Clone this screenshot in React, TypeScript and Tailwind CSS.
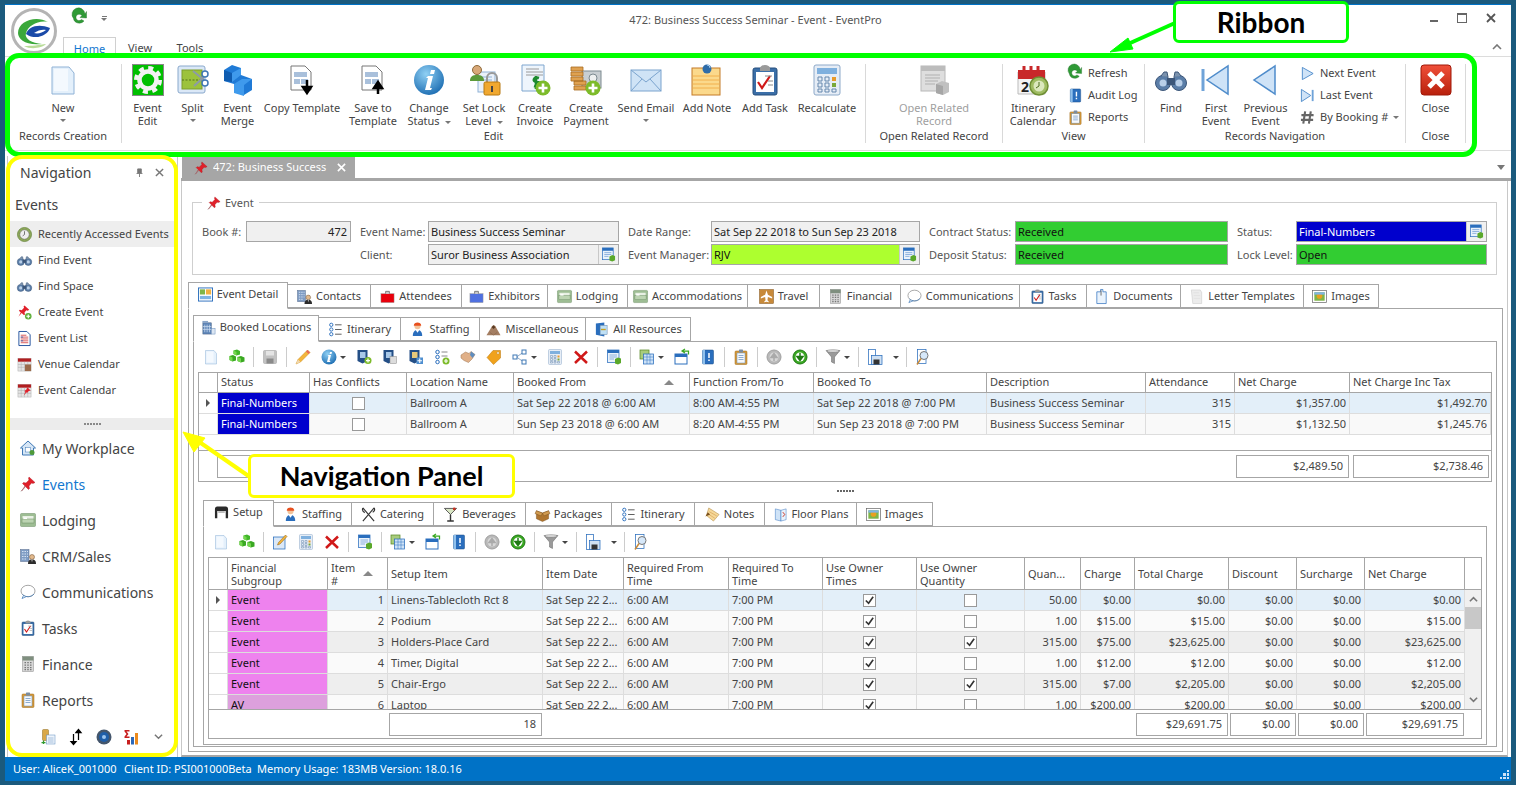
import React from "react";

const font = "font-['Noto_Sans','Open_Sans',sans-serif]";

// every icon is drawn on a 32x32 box and scaled down where needed
const I: Record<string, React.ReactNode> = {
  newdoc: (<><path d="M5 3h17l5 6v21H5z" fill="#e4f0fb" stroke="#8fb2d6" /><path d="M7 5h14v22H7z" fill="#f4f9fe" /></>),
  gear: (<><rect x=".5" y=".5" width="31" height="31" fill="#00bf00" stroke="#888" /><circle cx="16" cy="16" r="12" fill="none" stroke="#f2f2f2" strokeWidth="4" strokeDasharray="5 4.4" /><circle cx="16" cy="16" r="8.5" fill="#00bf00" stroke="#f2f2f2" strokeWidth="4.5" /></>),
  split: (<><rect x="1" y="2" width="27" height="27" rx="2" fill="#dbe8f7" stroke="#8aa9cc" /><rect x="5" y="6" width="20" height="19" fill="#9cc23c" stroke="#7d9e2c" /><path d="M5 16h20" stroke="#54701a" strokeDasharray="2 1.5" /><path d="M16 7l11 9M17 22l10-9" stroke="#8c9aa8" strokeWidth="2" /><circle cx="28" cy="10" r="3" fill="#fff" stroke="#3f78b5" strokeWidth="1.5" /><circle cx="28" cy="19" r="3" fill="#fff" stroke="#3f78b5" strokeWidth="1.5" /></>),
  merge: (<><path d="M2 6l8-5 9 3v7l11 4v11l-8 5-10-3v-8L2 17z" fill="#1f7ad6" /><path d="M2 6l8 3v9l-8-1z" fill="#0f5cb0" /><path d="M10 9l9-5v7l-9 7zM12 20l8-5 10 0-8 6v11l-10-3z" fill="#3f9aec" /></>),
  copytpl: (<><path d="M5 2h14l6 6v18H5z" fill="#fff" stroke="#777" /><path d="M8 8h13v5H8zM8 15h6v5H8zM15 15h7v5h-7z" fill="#a9c0db" /><path d="M21 16v10M17 23l4 6 4-6z" stroke="#000" strokeWidth="2.5" /></>),
  savetpl: (<><path d="M5 2h14l6 6v18H5z" fill="#fff" stroke="#777" /><path d="M8 8h13v5H8zM8 15h6v5H8zM15 15h7v5h-7z" fill="#a9c0db" /><path d="M21 20v10M17 24l4-6 4 6z" stroke="#000" strokeWidth="2.5" /></>),
  info: (<><circle cx="16" cy="16" r="15" fill="url(#gi)" /><path d="M18 6h4l-1 4h-4zM15 12h5l-3 12h2l-1 2h-6l3-12h-2z" fill="#fff" /></>),
  lock: (<><rect x="10" y="8" width="17" height="20" fill="#eaf1fa" stroke="#8fb2d6" /><path d="M13 13h11M13 16h11" stroke="#8fb2d6" /><circle cx="9" cy="6" r="4.5" fill="#d8a878" stroke="#8f6a3a" /><path d="M2 17c0-5 3-6 7-6s7 1 7 6z" fill="#5c9a3a" /><path d="M19 18v-4a5 5 0 0110 0v4" fill="none" stroke="#999" strokeWidth="2" /><rect x="16" y="18" width="16" height="13" rx="1.5" fill="#f0a830" stroke="#b87810" /><rect x="23" y="22" width="2" height="6" fill="#444" /></>),
  invoice: (<><path d="M3 1h22v26H3z" fill="#eef5fc" stroke="#7fa6cf" /><path d="M7 5h13M7 8h17M7 11h17" stroke="#9a9a9a" /><path d="M20 14c-6-2-7 4-2 4s4 6-3 4M17 12v13" fill="none" stroke="#1c8a2e" strokeWidth="2.6" /><circle cx="24" cy="24" r="7.5" fill="#7dbb2a" /><path d="M24 19.5v9M19.5 24h9" stroke="#fff" strokeWidth="2.6" /></>),
  payment: (<><rect x="12" y="7" width="19" height="17" fill="#c8ced2" stroke="#7c8a90" /><circle cx="23" cy="14" r="4" fill="#eef0f0" stroke="#7c8a90" /><path d="M1 3h12v4H1zM1 8h12v4H1zM1 13h12v4H1zM4 17h12v4H4zM4 22h12v4H4z" fill="#dfa150" stroke="#a86d22" strokeWidth=".8" /><circle cx="23" cy="24" r="7.5" fill="#7dbb2a" /><path d="M23 19.5v9M18.5 24h9" stroke="#fff" strokeWidth="2.6" /></>),
  email: (<><rect x="1" y="6" width="30" height="21" fill="#cfe3f6" stroke="#7aa3ce" /><path d="M1 6l15 12L31 6M1 27l11-12M31 27L20 15" fill="none" stroke="#7aa3ce" /></>),
  note: (<><rect x="1" y="4" width="28" height="27" fill="#fbd98c" stroke="#c47b26" /><path d="M2 12h26M2 16h26M2 20h26M2 24h26" stroke="#f2b04c" /><circle cx="16" cy="5" r="4.5" fill="#2f6ca8" /><path d="M16 1a3 3 0 013 3" stroke="#a5cdf0" fill="none" /></>),
  task: (<><rect x="4" y="4" width="24" height="27" rx="2" fill="#3b6fa8" stroke="#264e7c" /><rect x="7" y="8" width="18" height="20" fill="#fff" /><path d="M11 4a5 3 0 0110 0v3H11z" fill="#9a9a9a" /><path d="M9 18l4 6 8-12" fill="none" stroke="#d01818" strokeWidth="2.2" /><path d="M16 12h7M19 17h5M19 21h5" stroke="#888" /></>),
  calc: (<><rect x="3" y="1" width="26" height="30" rx="2" fill="#e6edf6" stroke="#8da9c9" /><rect x="6" y="4" width="20" height="6" fill="#7fb0de" /><path d="M7 13h4v4H7zM14 13h4v4h-4zM7 19h4v4H7zM14 19h4v4h-4zM7 25h4v3H7zM14 25h4v3h-4zM21 25h4v3h-4z" fill="none" stroke="#6487ad" /><rect x="21" y="13" width="4" height="4" fill="#e99b2a" /><rect x="21" y="19" width="4" height="4" fill="#79a83a" /></>),
  related: (<><rect x="3" y="2" width="24" height="25" fill="#dedede" stroke="#b8b8b8" /><rect x="3" y="2" width="24" height="5" fill="#bcbcbc" /><path d="M7 11h15M7 14h15M7 17h13M7 20h10" stroke="#b0b0b0" /><path d="M18 20l6-3 7 2v9l-6 3-7-2z" fill="#c0c0c0" /><path d="M18 20l7 2v9l-7-2z" fill="#a6a6a6" /></>),
  cal: (<><path d="M1 8h27v22H1z" fill="#f4f4f4" stroke="#bbb" /><path d="M1 6h27v9H1z" fill="#c8282a" /><path d="M7 2v6M14 2v6M21 2v6" stroke="#c8282a" strokeWidth="3" /><text x="4" y="28" fontSize="14" fontWeight="700" fill="#222">2</text><circle cx="22" cy="22" r="9" fill="#9fbc62" stroke="#6f8f34" strokeWidth="1.5" /><circle cx="22" cy="22" r="5.5" fill="#dbe8bd" /><path d="M22 18v4l-3 2" stroke="#4f6f20" fill="none" /></>),
  refresh: (<><path d="M26 8A13 13 0 103 17c1 9 14 13 21 5l-5-3c-4 4-10 2-11-3C7 9 15 6 20 11l-4 4 13 1V3z" fill="#2f9a36" stroke="#1f6f26" strokeWidth=".8" /></>),
  audit: (<><rect x="5" y="2" width="22" height="28" rx="2" fill="#2a6ebd" stroke="#174a85" /><rect x="5" y="2" width="5" height="28" fill="#8fc0ec" /><path d="M18 8v10M18 21v3" stroke="#fff" strokeWidth="3" /></>),
  reports: (<><rect x="4" y="4" width="24" height="27" rx="2" fill="#d89b3a" stroke="#9c6a1c" /><rect x="8" y="8" width="16" height="20" fill="#f6f8fb" stroke="#5e8dbf" /><rect x="12" y="1" width="8" height="6" rx="1" fill="#7a8ca0" /><path d="M11 13h10M11 17h10M11 21h10" stroke="#5e8dbf" strokeWidth="1.4" /></>),
  binoc: (<><circle cx="8" cy="19" r="7.5" fill="#5b7ea8" stroke="#3c5679" /><circle cx="24" cy="19" r="7.5" fill="#5b7ea8" stroke="#3c5679" /><circle cx="8" cy="19" r="3.5" fill="#b9cfe8" /><circle cx="24" cy="19" r="3.5" fill="#b9cfe8" /><rect x="12" y="14" width="8" height="7" fill="#3c5679" /><path d="M6 12l3-4h3l1 5M26 12l-3-4h-3l-1 5" fill="#7c93ae" stroke="#3c5679" /></>),
  first: (<><path d="M3 5v22" stroke="#6fa3d8" strokeWidth="3" /><path d="M28 2v28L7 16z" fill="#cfe3f7" stroke="#4f8ccb" strokeWidth="1.5" /></>),
  prev: (<><path d="M25 2v28L4 16z" fill="#cfe3f7" stroke="#4f8ccb" strokeWidth="1.5" /></>),
  next: (<><path d="M5 3v26l23-13z" fill="#cfe3f7" stroke="#4f8ccb" strokeWidth="2" /></>),
  last: (<><path d="M3 3v26l20-13z" fill="#cfe3f7" stroke="#4f8ccb" strokeWidth="2" /><path d="M27 4v24" stroke="#6fa3d8" strokeWidth="4" /></>),
  hash: (<path d="M11 3L7 29M23 3l-4 26M3 11h26M2 21h26" stroke="#666" strokeWidth="4.5" fill="none" />),
  closex: (<><rect x="1" y="1" width="30" height="30" rx="3" fill="url(#gr)" stroke="#a01808" /><path d="M9 9l14 14M23 9L9 23" stroke="#fff" strokeWidth="5" /></>),
  clock: (<><circle cx="16" cy="16" r="15" fill="#8ea95a" stroke="#64803a" strokeWidth="1.5" /><circle cx="16" cy="16" r="10" fill="#eee" stroke="#555" /><path d="M16 9v7l-4 3" stroke="#444" fill="none" strokeWidth="1.5" /></>),
  pin: (<><path d="M18 2l12 11-4 2-3-1-5 6 1 5-2 2-6-6-8 9 7-10-5-5 2-2 5 1 6-6-1-3z" fill="#e0202a" stroke="#a81018" strokeWidth=".8" /><path d="M11 21L2 31" stroke="#999" strokeWidth="1.5" /></>),
  pinadd: (<><path d="M16 1l10 9-3 2-3-1-4 5 1 4-2 2-5-5-7 8 5-9-4-4 2-2 4 1 5-5-1-3z" fill="#e0202a" /><circle cx="24" cy="24" r="7" fill="#5fb03a" /><path d="M24 20v8M20 24h8" stroke="#fff" strokeWidth="2.4" /></>),
  list: (<><path d="M4 1h17l7 7v23H4z" fill="#fff" stroke="#1f4f9c" strokeWidth="2" /><path d="M8 9h12M8 13h16M8 17h16M8 21h16M8 25h16" stroke="#d02828" strokeWidth="1.6" /><path d="M8 13h5M8 21h5" stroke="#2050b0" strokeWidth="1.6" /></>),
  vcal: (<><rect x="2" y="3" width="28" height="27" fill="#e4e4e4" stroke="#aaa" /><rect x="2" y="3" width="28" height="7" fill="#b01e20" /><path d="M2 16h28M2 22h28M9 10v20M16 10v20M23 10v20" stroke="#aaa" /><rect x="17" y="16" width="13" height="14" fill="#9a6a4a" /></>),
  ecal: (<><rect x="2" y="3" width="28" height="27" fill="#e4e4e4" stroke="#aaa" /><rect x="2" y="3" width="28" height="7" fill="#b01e20" /><path d="M2 16h28M2 22h28M9 10v20M16 10v20M23 10v20" stroke="#aaa" /><path d="M22 9l7 7-4 1-3 4-2-1-6 7 4-8-2-2 4-3z" fill="#e0202a" /></>),
  home: (<><path d="M16 2L1 16h4v14h22V16h4z" fill="#d6e6f6" stroke="#3f78b5" strokeWidth="2" /><rect x="11" y="15" width="10" height="9" fill="#fff" stroke="#3f78b5" /><circle cx="24" cy="25" r="5" fill="#4e9a3a" /></>),
  lodging: (<><rect x="1" y="3" width="30" height="26" rx="2" fill="#9dbd93" stroke="#6b8c62" /><rect x="5" y="8" width="22" height="14" fill="#e8f0e4" /><rect x="4" y="14" width="24" height="8" fill="#bcd4b2" stroke="#6b8c62" /><rect x="7" y="11" width="7" height="3" fill="#fff" /></>),
  crm: (<><rect x="1" y="3" width="17" height="24" fill="#7f9cc4" stroke="#54698a" /><path d="M4 7h3M9 7h3M14 7h2M4 12h3M9 12h3M14 12h2M4 17h3M9 17h3M14 17h2M4 22h3M9 22h3" stroke="#d6e2f2" strokeWidth="2" /><circle cx="24" cy="18" r="5" fill="#e2b98d" stroke="#6a4a2a" /><path d="M16 32c0-7 3-9 8-9s8 2 8 9z" fill="#2c2c2c" /><path d="M23 23l1 6 1-6z" fill="#fff" /></>),
  bubble: (<><ellipse cx="16" cy="14" rx="14" ry="11.5" fill="#fff" stroke="#888" strokeWidth="1.5" /><path d="M7 23l-3 6 9-4" fill="#fff" stroke="#3f78b5" strokeWidth="1.5" /><path d="M5 21c6 6 17 6 23-1" fill="none" stroke="#3f78b5" strokeWidth="1.5" /></>),
  fin: (<><rect x="5" y="1" width="22" height="30" fill="#d8d8d8" stroke="#8a8a8a" /><rect x="5" y="1" width="22" height="8" fill="#7f8f7f" /><path d="M9 13h3M14.500 13h3M20 13h3M9 18h3M14.500 18h3M20 18h3M9 23h3M14.500 23h3M20 23h3M9 27h3M14.500 27h3M20 27h3" stroke="#777" strokeWidth="2.5" /></>),
  sumchart: (<><path d="M1 2h10v3H5l4 5-4 5h6v3H1v-3l4-5-4-5z" fill="#c81e1e" /><rect x="6" y="22" width="6" height="9" fill="#c81e1e" /><rect x="14" y="16" width="6" height="15" fill="#2c68b8" /><rect x="22" y="8" width="6" height="23" fill="#ec8a1c" /></>),
  moveitem: (<><rect x="5" y="1" width="12" height="22" rx="2" fill="#d9a848" stroke="#8f6a1c" /><rect x="13" y="12" width="17" height="18" fill="#eef4fb" stroke="#5e8dbf" /><path d="M16 18h11M16 22h11M16 26h11" stroke="#5e8dbf" /><path d="M7 23v7M3 27h8" stroke="#2e9a2e" strokeWidth="2.5" /></>),
  updown: (<path d="M11 10v20M6 25l5 6 5-6zM21 2v20M16 7l5-6 5 6z" stroke="#000" strokeWidth="2.5" fill="#000" />),
  lens: (<><circle cx="16" cy="16" r="15" fill="#44566c" /><circle cx="16" cy="16" r="10" fill="#1f5ea8" /><circle cx="16" cy="16" r="4" fill="#9cc4ee" /></>),
  addgreen: (<><path d="M9 3l7-2 6 3v7l-7 2-6-3z" fill="#42b72a" /><path d="M1 14l7-2 6 3v8l-7 2-6-3zM17 16l7-2 7 3v8l-7 2-7-3z" fill="#3aa822" /><path d="M1 14l6 3v8l-6-3zM17 16l7 3v8l-7-3zM9 3l6 3v7l-6-3z" fill="#74d84e" /></>),
  save: (<><rect x="3" y="3" width="26" height="26" rx="2" fill="#c2c2c2" stroke="#9c9c9c" /><rect x="8" y="4" width="16" height="9" fill="#e4e4e4" /><rect x="9" y="19" width="14" height="10" fill="#8a8a8a" /></>),
  pencil: (<><path d="M25 2l5 5-19 19-9 4 4-9z" fill="#f4b63c" stroke="#c98818" /><path d="M25 2l5 5-3 3-5-5z" fill="#e86a5a" /><path d="M2 30l4-9 5 5z" fill="#f0d8b0" /></>),
  shieldadd: (<><path d="M3 2h20v22l-10 5-10-5z" fill="#244f86" /><path d="M8 6h11v12H8z" fill="#a8c8e8" /><circle cx="24" cy="23" r="7" fill="#7dbb2a" /><path d="M24 19v8M20 23h8" stroke="#fff" strokeWidth="2.5" /></>),
  shieldcopy: (<><path d="M3 2h20v22l-10 5-10-5z" fill="#244f86" /><path d="M8 6h11v12H8z" fill="#a8c8e8" /><rect x="16" y="15" width="13" height="14" fill="#dcdcdc" stroke="#888" /></>),
  shieldnew: (<><path d="M3 2h20v22l-10 5-10-5z" fill="#244f86" /><path d="M8 6h11v12H8z" fill="#e6c87a" /><rect x="17" y="17" width="13" height="13" fill="#4f8fd0" /><path d="M23.500 19v9M19 23.500h9" stroke="#fff" strokeWidth="2.2" /></>),
  itin: (<><circle cx="7" cy="6" r="3.500" fill="#fff" stroke="#2a6ebd" strokeWidth="2" /><circle cx="7" cy="16" r="3.500" fill="#fff" stroke="#2a6ebd" strokeWidth="2" /><circle cx="7" cy="26" r="3.500" fill="#fff" stroke="#2a6ebd" strokeWidth="2" /><path d="M15 6h14M15 16h14M15 26h14" stroke="#555" strokeWidth="2" /></>),
  itinadd: (<><circle cx="7" cy="6" r="3.500" fill="#fff" stroke="#2a6ebd" strokeWidth="2" /><circle cx="7" cy="16" r="3.500" fill="#fff" stroke="#2a6ebd" strokeWidth="2" /><circle cx="7" cy="26" r="3.500" fill="#fff" stroke="#2a6ebd" strokeWidth="2" /><path d="M15 6h12M15 14h12" stroke="#888" strokeWidth="2" /><circle cx="24" cy="24" r="7" fill="#7dbb2a" /><path d="M24 20v8M20 24h8" stroke="#fff" strokeWidth="2.4" /></>),
  hands: (<><path d="M2 12l9-6 7 3 4-4 8 6-6 9-7 7-9-4-6-5z" fill="#e0b088" stroke="#9c7450" /><path d="M22 5l8 6-5 7-5-6z" fill="#5e8dbf" /></>),
  tag: (<><path d="M14 3h15v15L15 31 2 17z" fill="#f0a21c" stroke="#b87408" /><circle cx="24" cy="8" r="2.500" fill="#fff" stroke="#b87408" /></>),
  nodes: (<><path d="M9 16L22 7M9 16l13 9" stroke="#6a8cb4" strokeWidth="1.500" /><rect x="2" y="12" width="8" height="8" fill="#fff" stroke="#3f78b5" strokeWidth="2" /><rect x="20" y="2" width="8" height="8" fill="#fff" stroke="#3f78b5" strokeWidth="2" /><rect x="20" y="22" width="8" height="8" fill="#fff" stroke="#3f78b5" strokeWidth="2" /></>),
  xred: (<path d="M4 5l24 23M28 5L4 28" stroke="#d01818" strokeWidth="5" />),
  gridgo: (<><rect x="3" y="2" width="23" height="25" fill="#eaf2fb" stroke="#2a6ebd" strokeWidth="1.500" /><rect x="3" y="2" width="23" height="6" fill="#2a6ebd" /><path d="M7 12h15M7 16h15M7 20h9" stroke="#2a6ebd" /><path d="M18 20l6-3 6 2v9l-6 3-6-2z" fill="#5aa82a" /></>),
  gridadd: (<><rect x="2" y="2" width="18" height="18" fill="#a8cc7c" stroke="#5a8a2a" strokeWidth="1.500" /><rect x="9" y="10" width="20" height="20" fill="#cfe3f7" stroke="#2a6ebd" strokeWidth="1.500" /><path d="M9 16h20M9 22h20M16 10v20M22 10v20" stroke="#2a6ebd" /></>),
  winarrow: (<><rect x="2" y="10" width="24" height="20" fill="#fff" stroke="#2a6ebd" strokeWidth="2" /><rect x="2" y="10" width="24" height="6" fill="#2a6ebd" /><path d="M29 11V4H17M22 0l-6 4 6 4" fill="none" stroke="#3aa822" strokeWidth="2.500" /></>),
  down: (<><circle cx="16" cy="16" r="14" fill="#3aa822" stroke="#1f7a14" strokeWidth="2" /><circle cx="16" cy="16" r="9" fill="#fff" /><path d="M16 8v9M10 15l6 8 6-8z" stroke="#1f7a14" strokeWidth="3" fill="#1f7a14" /></>),
  up: (<><circle cx="16" cy="16" r="14" fill="#b8b8b8" stroke="#a0a0a0" strokeWidth="2" /><circle cx="16" cy="16" r="9" fill="#d8d8d8" /><path d="M16 24v-9M10 17l6-8 6 8z" stroke="#aaa" strokeWidth="3" fill="#aaa" /></>),
  funnel: (<><path d="M2 3h28L19 16v13l-6-3V16z" fill="#9a9a9a" stroke="#666" /><ellipse cx="16" cy="4" rx="13" ry="2.500" fill="#e4e4e4" stroke="#666" /></>),
  disk: (<><rect x="3" y="1" width="14" height="30" fill="#fff" stroke="#2a6ebd" strokeWidth="1.500" /><rect x="9" y="13" width="21" height="18" fill="#cfe0f2" stroke="#2a6ebd" strokeWidth="1.500" /><rect x="13" y="21" width="12" height="10" fill="#333" /></>),
  findoc: (<><rect x="5" y="1" width="17" height="28" fill="#fff" stroke="#2a6ebd" strokeWidth="1.500" /><circle cx="18" cy="13" r="8" fill="#d6e8fa" stroke="#777" strokeWidth="2" /><path d="M12 19L4 31" stroke="#c88a3a" strokeWidth="3" /></>),
  edit: (<><rect x="3" y="6" width="23" height="24" fill="#dbe8f7" stroke="#2a6ebd" strokeWidth="1.500" /><path d="M27 2l3 3-14 15-5 2 2-5z" fill="#f4b63c" stroke="#885a10" /></>),
  table: (<><path d="M2 9c0-4 2-6 5-6h18c3 0 5 2 5 6v19h-5V13H7v15H2z" fill="#2a2a2a" /><rect x="9" y="13" width="14" height="4" fill="#bbb" /></>),
  staff: (<><circle cx="16" cy="9" r="6.500" fill="#f2c49c" /><path d="M8 8c0-9 16-9 16 0z" fill="#e8501e" /><path d="M6 30c0-9 4-13 10-13s10 4 10 13z" fill="#2a6ebd" /><path d="M12 17l4 6 4-6z" fill="#fff" /></>),
  catering: (<path d="M4 2l24 28M28 2L4 30M4 2c-2 4-1 7 4 10M28 2c2 3 1 7-3 9" stroke="#333" strokeWidth="2.500" fill="none" />),
  cocktail: (<><path d="M3 3h26L16 16z" fill="#d8e6c4" stroke="#555" strokeWidth="2" /><path d="M16 16v12M9 30h14" stroke="#333" strokeWidth="3" /><circle cx="24" cy="4" r="3" fill="#c83020" /></>),
  box: (<><path d="M3 8l13 5 13-5v17l-13 6-13-6z" fill="#b0752e" stroke="#7a4f1c" /><path d="M3 8L0 14l13 5 3-6zM29 8l3 6-13 5-3-6z" fill="#d09a50" stroke="#7a4f1c" /></>),
  notes: (<><path d="M8 2l22 14-12 14L3 18z" fill="#f6d898" stroke="#a87a2a" /><path d="M9 10l16 9M7 15l14 9" stroke="#c88a3a" /><path d="M1 20l5-9 5 5z" fill="#7a4f1c" /></>),
  floor: (<><path d="M5 4l12 3v23L5 27z" fill="#cfe3f7" stroke="#2a6ebd" /><path d="M17 7l11-3v23l-11 3z" fill="#eaf2fb" stroke="#2a6ebd" /><path d="M21 11l4 5-4 5" stroke="#c83020" fill="none" strokeWidth="2" /></>),
  images: (<><rect x="1" y="3" width="30" height="26" fill="#fff" stroke="#666" strokeWidth="1.500" /><rect x="5" y="7" width="22" height="18" fill="#7fb548" /><circle cx="16" cy="15" r="6" fill="#e8a020" /><path d="M5 7h22v5H5z" fill="#7eb4e4" /></>),
  docs: (<><path d="M6 6h8V1h5v5h7v25H6z" fill="#eaf3fc" stroke="#2a6ebd" strokeWidth="1.500" /><path d="M15 3v11" stroke="#666" strokeWidth="2" /></>),
  letter: (<><path d="M5 2h19l3 5v24H8z" fill="#ececec" stroke="#c4c4c4" /><path d="M9 8h12M10 14h14M10 20h14" stroke="#d8d8d8" /></>),
  travel: (<><rect x="1" y="1" width="30" height="30" fill="#c88a3a" stroke="#7a4f1c" /><path d="M16 3l3 9 9 5v3l-9-3-1 7 3 3v1l-5-1-5 1v-1l3-3-1-7-9 3v-3l9-5z" fill="#fff" /></>),
  attendee: (<><rect x="2" y="10" width="28" height="19" fill="#e8000c" stroke="#999" /><path d="M12 10V5h8v5" fill="#ccc" stroke="#777" strokeWidth="2" /></>),
  exhibit: (<><rect x="2" y="10" width="28" height="19" fill="#4f70e0" stroke="#999" /><path d="M12 10V5h8v5" fill="#ccc" stroke="#777" strokeWidth="2" /></>),
  detail: (<><rect x="1" y="2" width="30" height="28" fill="#fff" stroke="#2a6ebd" strokeWidth="2" /><rect x="4" y="5" width="11" height="11" fill="#7fb548" /><rect x="17" y="5" width="11" height="11" fill="#f0b040" /><rect x="4" y="19" width="24" height="7" fill="#7eb4e4" /></>),
  booked: (<><rect x="4" y="6" width="18" height="24" fill="#5f86b8" stroke="#3c5679" /><path d="M8 10v16M13 10v16M18 10v16M4 14h18M4 20h18" stroke="#cfe0f2" strokeWidth="1.500" /><rect x="3" y="2" width="12" height="4" fill="#8aa6c8" /><rect x="22" y="18" width="8" height="12" fill="#dce6f2" stroke="#5f86b8" /></>),
  misc: (<><path d="M1 28l12-19c2-3 5-3 7 0l11 19z" fill="#a47e62" /><path d="M12 11l4 4 4-4-4-4z" fill="#5a3a22" /><path d="M8 22l8 6 8-6" stroke="#7a5a42" fill="none" /></>),
  allres: (<><path d="M4 3l18-2v30L4 27z" fill="#2a6ebd" /><rect x="13" y="7" width="15" height="20" fill="#bfe0f6" stroke="#607d9e" /><path d="M15 16h10" stroke="#c8a020" strokeWidth="3" /></>),
};

function Ico({ n, s = 16 }: { n: string; s?: number }) {
  return (
    <svg viewBox="0 0 32 32" width={s} height={s} className="shrink-0 overflow-visible">
      {I[n]}
    </svg>
  );
}

function Caret({ c = "border-t-[#777]" }: { c?: string }) {
  return <span className={`inline-block align-middle w-0 h-0 border-x-[3px] border-t-[3px] border-x-transparent ${c}`} />;
}

function Big({ icon, label, w, caret, dim }: { icon: string; label: string; w: string; caret?: "below" | "inline"; dim?: boolean }) {
  return (
    <div className={`flex flex-col items-center shrink-0 ${w}`}>
      <Ico n={icon} s={32} />
      <div className={`mt-[5px] text-center whitespace-pre-line leading-[13px] ${dim ? "text-[#a0a0a0]" : ""}`}>
        {label}
        {caret === "inline" && (
          <span className="ml-[5px]">
            <Caret />
          </span>
        )}
      </div>
      {caret === "below" && (
        <div className="h-[13px] flex items-center">
          <Caret />
        </div>
      )}
    </div>
  );
}

function Small({ icon, label, caret }: { icon: string; label: string; caret?: boolean }) {
  return (
    <div className="flex items-center h-[22px] whitespace-nowrap gap-[5px]">
      <span className="w-[15px] flex justify-center">
        <Ico n={icon} s={15} />
      </span>
      {label}
      {caret && <Caret />}
    </div>
  );
}

function Group({ label, w, children, pad = "" }: { label: string; w: string; children: React.ReactNode; pad?: string }) {
  return (
    <div className={`${w} h-[79px] shrink-0 border-r border-[#d9d9d9] flex flex-col`}>
      <div className={`h-[70px] flex ${pad}`}>{children}</div>
      <div className="h-[14px] leading-[14px] text-center whitespace-nowrap">{label}</div>
    </div>
  );
}

function Ribbon() {
  return (
    <div className="h-[99px] shrink-0 text-[#444]">
      <div className="h-[94px] border-b border-[#dcdcdc] pt-[7px] flex">
        <Group label="Records Creation" w="w-[117px]" pad="justify-center">
          <Big icon="newdoc" label="New" w="w-[60px]" caret="below" />
        </Group>
        <Group label="Edit" w="w-[744px]" pad="pl-[3px]">
          <Big icon="gear" label={"Event\nEdit"} w="w-[45px]" />
          <Big icon="split" label="Split" w="w-[45px]" caret="below" />
          <Big icon="merge" label={"Event\nMerge"} w="w-[45px]" />
          <Big icon="copytpl" label="Copy Template" w="w-[84px]" />
          <Big icon="savetpl" label={"Save to\nTemplate"} w="w-[58px]" />
          <Big icon="info" label={"Change\nStatus"} w="w-[54px]" caret="inline" />
          <Big icon="lock" label={"Set Lock\nLevel"} w="w-[56px]" caret="inline" />
          <Big icon="invoice" label={"Create\nInvoice"} w="w-[46px]" />
          <Big icon="payment" label={"Create\nPayment"} w="w-[56px]" />
          <Big icon="email" label="Send Email" w="w-[64px]" caret="below" />
          <Big icon="note" label="Add Note" w="w-[58px]" />
          <Big icon="task" label="Add Task" w="w-[58px]" />
          <Big icon="calc" label="Recalculate" w="w-[66px]" />
        </Group>
        <Group label="Open Related Record" w="w-[137px]" pad="justify-center">
          <Big icon="related" label={"Open Related\nRecord"} w="w-[90px]" dim />
        </Group>
        <Group label="View" w="w-[142px]" pad="pl-[2px]">
          <Big icon="cal" label={"Itinerary\nCalendar"} w="w-[56px]" />
          <div className="ml-[7px] -mt-[2px]">
            <Small icon="refresh" label="Refresh" />
            <Small icon="audit" label="Audit Log" />
            <Small icon="reports" label="Reports" />
          </div>
        </Group>
        <Group label="Records Navigation" w="w-[261px]" pad="pl-[5px]">
          <Big icon="binoc" label="Find" w="w-[42px]" />
          <Big icon="first" label={"First\nEvent"} w="w-[48px]" />
          <Big icon="prev" label={"Previous\nEvent"} w="w-[51px]" />
          <div className="ml-[9px] -mt-[2px]">
            <Small icon="next" label="Next Event" />
            <Small icon="last" label="Last Event" />
            <Small icon="hash" label="By Booking #" caret />
          </div>
        </Group>
        <Group label="Close" w="w-[60px]" pad="justify-center">
          <Big icon="closex" label="Close" w="w-[50px]" />
        </Group>
      </div>
    </div>
  );
}

const subItems = [
  ["clock", "Recently Accessed Events"],
  ["binoc", "Find Event"],
  ["binoc", "Find Space"],
  ["pinadd", "Create Event"],
  ["list", "Event List"],
  ["vcal", "Venue Calendar"],
  ["ecal", "Event Calendar"],
];

const modules = [
  ["home", "My Workplace"],
  ["pin", "Events"],
  ["lodging", "Lodging"],
  ["crm", "CRM/Sales"],
  ["bubble", "Communications"],
  ["task", "Tasks"],
  ["fin", "Finance"],
  ["reports", "Reports"],
];

function Nav() {
  return (
    <div className="w-[171px] ml-[2px] shrink-0 border-x border-[#c8c8c8] text-[#444] flex flex-col">
      <div className="h-[30px] flex items-center pl-[12px] pr-[13px] text-[14px] mt-[1px]">
        <span className="flex-1">Navigation</span>
        <svg viewBox="0 0 10 10" width="9" height="9" className="mr-[11px]">
          <path d="M3 1h4v4l1 1H2l1-1zM5 6v4" fill="#777" stroke="#777" />
        </svg>
        <svg viewBox="0 0 10 10" width="9" height="9">
          <path d="M1 1l8 8M9 1L1 9" stroke="#777" strokeWidth="1.600" />
        </svg>
      </div>
      <div className="h-[34px] flex items-center pl-[7px] text-[14px]">Events</div>
      {subItems.map(([icon, label], i) => (
        <div key={label} className={`h-[26px] flex items-center pl-[9px] gap-[6px] shrink-0 ${i === 0 ? "bg-[#eeeeee]" : ""}`}>
          <Ico n={icon} s={15} />
          <span className="whitespace-nowrap">{label}</span>
        </div>
      ))}
      <div className="h-[12px] mt-[15px] shrink-0 bg-[#ececec] flex justify-center items-center gap-[1px]">
        {[0, 1, 2, 3, 4, 5].map((d) => (
          <span key={d} className="w-[2px] h-[2px] bg-[#888]" />
        ))}
      </div>
      {modules.map(([icon, label]) => (
        <div key={label} className={`h-[36px] shrink-0 flex items-center pl-[12px] gap-[6px] text-[14px] ${label === "Events" ? "text-[#1278d0]" : ""}`}>
          <Ico n={icon} s={16} />
          <span>{label}</span>
        </div>
      ))}
      <div className="h-[37px] flex items-center pl-[32px]">
        <Ico n="moveitem" s={16} />
        <span className="ml-[12px]"><Ico n="updown" s={16} /></span>
        <span className="ml-[12px]"><Ico n="lens" s={16} /></span>
        <span className="ml-[12px]"><Ico n="sumchart" s={16} /></span>
        <svg viewBox="0 0 10 10" width="9" height="9" className="ml-[14px]">
          <path d="M1 3l4 4 4-4" fill="none" stroke="#777" strokeWidth="1.600" />
        </svg>
      </div>
    </div>
  );
}

function Field({ children, bg = "bg-[#f0f0f0]", right, btn, h = "h-[21px]", text = "text-[#222]" }: { children: React.ReactNode; bg?: string; right?: boolean; btn?: boolean; h?: string; text?: string }) {
  return (
    <div className={`${h} flex border border-[#a6a6a6] ${bg} ${text}`}>
      <span className={`flex-1 px-[2px] leading-[19px] whitespace-nowrap ${right ? "text-right pr-[3px]" : ""}`}>{children}</span>
      {btn && (
        <span className="w-[20px] bg-[#f0f0f0] border-l border-[#c8c8c8] flex items-center justify-center">
          <Ico n="gridgo" s={15} />
        </span>
      )}
    </div>
  );
}

function Label({ children, pad = "pl-[9px]" }: { children: React.ReactNode; pad?: string }) {
  return <div className={`${pad} text-[#555] leading-[21px] whitespace-nowrap`}>{children}</div>;
}

function EventBox() {
  return (
    <div className="mx-[10px] h-[73px] border border-[#cfcfcf] relative pt-[18px] pl-[9px]">
      <div className="absolute left-[9px] -top-[9px] bg-white flex items-center gap-[4px] pr-[5px] pl-[5px] h-[18px] text-[#555]">
        <Ico n="pin" s={14} />
        <span>Event</span>
      </div>
      <div className="grid grid-cols-[44px_105px_77px_191px_92px_209px_95px_213px_68px_191px] gap-y-[2px]">
        <Label pad="">Book #:</Label>
        <Field right>472</Field>
        <Label>Event Name:</Label>
        <Field>Business Success Seminar</Field>
        <Label>Date Range:</Label>
        <Field>Sat Sep 22 2018 to Sun Sep 23 2018</Field>
        <Label>Contract Status:</Label>
        <Field bg="bg-[#32cd32]" text="text-[#111]">Received</Field>
        <Label>Status:</Label>
        <Field bg="bg-[#0000cd]" text="text-white" btn>Final-Numbers</Field>
        <span />
        <span />
        <Label>Client:</Label>
        <Field btn>Suror Business Association</Field>
        <Label>Event Manager:</Label>
        <Field bg="bg-[#adff2f]" btn text="text-[#111]">RJV</Field>
        <Label>Deposit Status:</Label>
        <Field bg="bg-[#32cd32]" text="text-[#111]">Received</Field>
        <Label>Lock Level:</Label>
        <Field bg="bg-[#32cd32]" text="text-[#111]">Open</Field>
      </div>
    </div>
  );
}

function Tab({ icon, label, w, active }: { icon: string; label: string; w: string; active?: boolean }) {
  return (
    <div className={`${w} shrink-0 flex items-center justify-center gap-[4px] border border-[#a6a6a6] -ml-px first:ml-0 whitespace-nowrap text-[#444] ${active ? "h-[27px] bg-white border-b-white -mb-px pb-[2px] relative" : "h-[24px] bg-white"}`}>
      <Ico n={icon} s={15} />
      <span>{label}</span>
    </div>
  );
}

const tbA = ["newdoc", "addgreen", "|", "save", "|", "pencil", "info>", "shieldadd", "shieldcopy", "shieldnew", "itinadd", "hands", "tag", "nodes>", "calc", "xred", "|", "gridgo", "|", "gridadd>", "winarrow", "audit", "|", "reports", "|", "up", "down", "|", "funnel>", "|", "disk", "_", "|", "findoc"];
const tbB = ["newdoc", "addgreen", "|", "edit", "calc", "xred", "|", "gridgo", "|", "gridadd>", "winarrow", "audit", "|", "up", "down", "|", "funnel>", "|", "disk", "_", "|", "findoc"];

function Toolbar({ items }: { items: string[] }) {
  return (
    <div className="h-[30px] shrink-0 flex items-center pl-[4px]">
      {items.map((it, i) => {
        if (it === "|") {
          return (
            <span key={i} className="w-[7px] flex justify-center">
              <span className="w-px h-[20px] bg-[#cccccc]" />
            </span>
          );
        }
        if (it === "_") {
          return (
            <span key={i} className="w-[15px] flex justify-center">
              <Caret c="border-t-[#444]" />
            </span>
          );
        }
        const arrow = it.endsWith(">");
        return (
          <React.Fragment key={i}>
            <span className="w-[26px] flex justify-center">
              <Ico n={arrow ? it.slice(0, -1) : it} s={16} />
            </span>
            {arrow && (
              <span className="w-[9px] -ml-[2px] mr-[2px] flex">
                <Caret c="border-t-[#444]" />
              </span>
            )}
          </React.Fragment>
        );
      })}
    </div>
  );
}

function Check({ on }: { on?: boolean }) {
  return (
    <span className="w-[13px] h-[13px] border border-[#999] bg-white flex items-center justify-center">
      {on && (
        <svg viewBox="0 0 12 12" width="11" height="11">
          <path d="M2 6l3 3 5-7" fill="none" stroke="#333" strokeWidth="1.800" />
        </svg>
      )}
    </span>
  );
}

function SortUp() {
  return <span className="w-0 h-0 border-x-[5px] border-b-[5px] border-x-transparent border-b-[#888]" />;
}

const G1 = "grid grid-cols-[19px_92px_97px_107px_176px_124px_173px_159px_89px_115px_141px]";

const g1Heads = ["", "Status", "Has Conflicts", "Location Name", "Booked From", "Function From/To", "Booked To", "Description", "Attendance", "Net Charge", "Net Charge Inc Tax"];
const g1Rows = [
  ["Ballroom A", "Sat Sep 22 2018 @ 6:00 AM", "8:00 AM-4:55 PM", "Sat Sep 22 2018 @ 7:00 PM", "Business Success Seminar", "315", "$1,357.00", "$1,492.70"],
  ["Ballroom A", "Sun Sep 23 2018 @ 6:00 AM", "8:20 AM-4:55 PM", "Sun Sep 23 2018 @ 7:00 PM", "Business Success Seminar", "315", "$1,132.50", "$1,245.76"],
];

function Cell({ children, right, center, cls = "" }: { children?: React.ReactNode; right?: boolean; center?: boolean; cls?: string }) {
  return (
    <div className={`h-full px-[3px] border-r border-[#dddddd] overflow-hidden whitespace-nowrap flex items-center ${right ? "justify-end" : ""} ${center ? "justify-center" : ""} ${cls}`}>
      {children}
    </div>
  );
}

function Marker() {
  return (
    <div className="h-full border-r border-[#dddddd] bg-white flex items-center justify-center">
      <span className="w-0 h-0 border-y-[4px] border-l-[4px] border-y-transparent border-l-[#555]" />
    </div>
  );
}

function Sum({ children, cls = "" }: { children?: React.ReactNode; cls?: string }) {
  return <div className={`h-[23px] border border-[#a6a6a6] px-[5px] flex items-center justify-end ${cls}`}>{children}</div>;
}

function LocationsGrid() {
  return (
    <div className="ml-[4px] w-[1294px] h-[110px] shrink-0 border border-[#a6a6a6] flex flex-col text-[#444]">
      <div className={`${G1} h-[20px] shrink-0 border-b border-[#a6a6a6]`}>
        {g1Heads.map((h, i) => (
          <div key={i} className="border-r border-[#a6a6a6] last:border-r-0 px-[3px] flex items-center justify-between whitespace-nowrap">
            {h}
            {h === "Booked From" && (
              <span className="mr-[12px] flex">
                <SortUp />
              </span>
            )}
          </div>
        ))}
      </div>
      {g1Rows.map((r, i) => {
        const bg = i === 0 ? "bg-[#e3eff9]" : "bg-[#f9f9f9]";
        return (
          <div key={i} className={`${G1} h-[21px] shrink-0 border-b border-[#dddddd]`}>
            {i === 0 ? <Marker /> : <div className="border-r border-[#dddddd]" />}
            <Cell cls="bg-[#0000cd] text-white">Final-Numbers</Cell>
            <Cell center cls={bg}><Check /></Cell>
            {r.map((c, j) => (
              <Cell key={j} right={j >= 5} cls={bg}>{c}</Cell>
            ))}
          </div>
        );
      })}
      <div className="flex-1 border-b border-[#a6a6a6]" />
      <div className={`${G1} h-[30px] shrink-0 pt-[4px]`}>
        <span />
        <Sum cls="-ml-px" />
        <span className="col-span-6" />
        <span />
        <Sum cls="ml-px w-[113px] text-[#444]">$2,489.50</Sum>
        <Sum cls="ml-[3px] w-[136px]">$2,738.46</Sum>
      </div>
    </div>
  );
}

const G2 = "grid grid-cols-[19px_100px_60px_155px_81px_105px_94px_94px_108px_56px_54px_94px_68px_68px_100px_16px]";
const g2Heads = ["", "Financial\nSubgroup", "Item\n#", "Setup Item", "Item Date", "Required From\nTime", "Required To\nTime", "Use Owner\nTimes", "Use Owner\nQuantity", "Quan...", "Charge", "Total Charge", "Discount", "Surcharge", "Net Charge", ""];
const g2Rows: [string, string, string, boolean, string, string, string, string][] = [
  ["Event", "1", "Linens-Tablecloth Rct 8", false, "50.00", "$0.00", "$0.00", "$0.00"],
  ["Event", "2", "Podium", false, "1.00", "$15.00", "$15.00", "$15.00"],
  ["Event", "3", "Holders-Place Card", true, "315.00", "$75.00", "$23,625.00", "$23,625.00"],
  ["Event", "4", "Timer, Digital", false, "1.00", "$12.00", "$12.00", "$12.00"],
  ["Event", "5", "Chair-Ergo", true, "315.00", "$7.00", "$2,205.00", "$2,205.00"],
  ["AV", "6", "Laptop", false, "1.00", "$200.00", "$200.00", "$200.00"],
];

function SetupGrid() {
  return (
    <div className="ml-[4px] w-[1274px] h-[182px] shrink-0 border border-[#a6a6a6] flex flex-col text-[#444]">
      <div className={`${G2} h-[32px] shrink-0 border-b border-[#a6a6a6]`}>
        {g2Heads.map((h, i) => (
          <div key={i} className="border-r border-[#a6a6a6] last:border-r-0 px-[3px] flex items-center justify-between whitespace-pre-line leading-[13px]">
            <span>{h}</span>
            {i === 2 && (
              <span className="mr-[11px] flex">
                <SortUp />
              </span>
            )}
          </div>
        ))}
      </div>
      <div className="h-[119px] shrink-0 overflow-hidden relative">
        {g2Rows.map((r, i) => {
          const bg = i === 0 ? "bg-[#e3eff9]" : i % 2 === 0 ? "bg-[#eeeeee]" : "bg-[#fafafa]";
          return (
            <div key={i} className={`${G2} h-[21px] border-b border-[#dddddd]`}>
              {i === 0 ? <Marker /> : <div className="border-r border-[#dddddd]" />}
              <Cell cls={`text-[#111] ${r[0] === "AV" ? "bg-[#dda0dd]" : "bg-[#ee82ee]"}`}>{r[0]}</Cell>
              <Cell right cls={bg}>{r[1]}</Cell>
              <Cell cls={bg}>{r[2]}</Cell>
              <Cell cls={bg}>Sat Sep 22 2...</Cell>
              <Cell cls={bg}>6:00 AM</Cell>
              <Cell cls={bg}>7:00 PM</Cell>
              <Cell center cls={bg}><Check on /></Cell>
              <Cell center cls={bg}><Check on={r[3]} /></Cell>
              <Cell right cls={bg}>{r[4]}</Cell>
              <Cell right cls={bg}>{r[5]}</Cell>
              <Cell right cls={bg}>{r[6]}</Cell>
              <Cell right cls={bg}>$0.00</Cell>
              <Cell right cls={bg}>$0.00</Cell>
              <Cell right cls={bg}>{r[7]}</Cell>
              <span />
            </div>
          );
        })}
        <div className="absolute right-0 top-0 bottom-0 w-[16px] bg-[#f0f0f0] flex flex-col items-center">
          <svg viewBox="0 0 10 10" width="9" height="9" className="mt-[5px]">
            <path d="M1 7l4-4 4 4" fill="none" stroke="#777" strokeWidth="1.800" />
          </svg>
          <div className="mt-[3px] w-full h-[22px] bg-[#c8c8c8]" />
          <svg viewBox="0 0 10 10" width="9" height="9" className="mt-auto mb-[5px]">
            <path d="M1 3l4 4 4-4" fill="none" stroke="#777" strokeWidth="1.800" />
          </svg>
        </div>
      </div>
      <div className={`${G2} flex-1 border-t border-[#a6a6a6] pt-[3px]`}>
        <span className="col-span-3" />
        <Sum cls="mx-px">18</Sum>
        <span className="col-span-7" />
        <Sum cls="mx-px">$29,691.75</Sum>
        <Sum cls="mx-px">$0.00</Sum>
        <Sum cls="mx-px">$0.00</Sum>
        <Sum cls="mx-px">$29,691.75</Sum>
      </div>
    </div>
  );
}

function Document() {
  return (
    <div className="flex-1 ml-[3px] flex flex-col min-w-0">
      <div className="h-[25px] shrink-0 flex border-b-[3px] border-[#a6a6a6] pt-px relative">
        <div className="w-[173px] ml-px bg-[#a6a6a6] text-white flex items-center pl-[12px] gap-[5px]">
          <Ico n="pin" s={14} />
          <span className="w-[116px] overflow-hidden whitespace-nowrap">472: Business Success Seminar</span>
          <svg viewBox="0 0 10 10" width="9" height="9" className="ml-[3px]">
            <path d="M1 1l8 8M9 1L1 9" stroke="#fff" strokeWidth="1.800" />
          </svg>
        </div>
        <span className="ml-auto mr-[6px] mt-[8px] flex">
          <span className="w-0 h-0 border-x-[4px] border-t-[5px] border-x-transparent border-t-[#777]" />
        </span>
      </div>
      <div className="w-[1327px] flex-1 border-x border-b-[2px] border-x-[#c8c8c8] border-b-[#a6a6a6] pt-[21px] flex flex-col min-h-0">
        <EventBox />
        <div className="ml-[6px] mt-[7px] h-[26px] flex items-end shrink-0">
          <Tab icon="detail" label="Event Detail" w="w-[100px]" active />
          <Tab icon="crm" label="Contacts" w="w-[84px]" />
          <Tab icon="attendee" label="Attendees" w="w-[92px]" />
          <Tab icon="exhibit" label="Exhibitors" w="w-[87px]" />
          <Tab icon="lodging" label="Lodging" w="w-[81px]" />
          <Tab icon="lodging" label="Accommodations" w="w-[121px]" />
          <Tab icon="travel" label="Travel" w="w-[73px]" />
          <Tab icon="fin" label="Financial" w="w-[82px]" />
          <Tab icon="bubble" label="Communications" w="w-[120px]" />
          <Tab icon="task" label="Tasks" w="w-[68px]" />
          <Tab icon="docs" label="Documents" w="w-[95px]" />
          <Tab icon="letter" label="Letter Templates" w="w-[124px]" />
          <Tab icon="images" label="Images" w="w-[76px]" />
        </div>
        <div className="ml-[6px] w-[1315px] flex-1 border border-[#a6a6a6] pt-[6px] pl-[4px] flex flex-col min-h-0">
          <div className="h-[26px] flex items-end shrink-0">
            <Tab icon="booked" label="Booked Locations" w="w-[126px]" active />
            <Tab icon="itin" label="Itinerary" w="w-[83px]" />
            <Tab icon="staff" label="Staffing" w="w-[80px]" />
            <Tab icon="misc" label="Miscellaneous" w="w-[107px]" />
            <Tab icon="allres" label="All Resources" w="w-[106px]" />
          </div>
          <div className="w-[1304px] h-[406px] border border-[#a6a6a6] flex flex-col">
            <Toolbar items={tbA} />
            <LocationsGrid />
            <div className="h-[18px] shrink-0 flex justify-center items-center gap-[1px]">
              {[0, 1, 2, 3, 4, 5].map((d) => (
                <span key={d} className="w-[2px] h-[2px] bg-[#666]" />
              ))}
            </div>
            <div className="ml-[9px] h-[26px] flex items-end shrink-0">
              <Tab icon="table" label="Setup" w="w-[71px]" active />
              <Tab icon="staff" label="Staffing" w="w-[79px]" />
              <Tab icon="catering" label="Catering" w="w-[83px]" />
              <Tab icon="cocktail" label="Beverages" w="w-[93px]" />
              <Tab icon="box" label="Packages" w="w-[87px]" />
              <Tab icon="itin" label="Itinerary" w="w-[84px]" />
              <Tab icon="notes" label="Notes" w="w-[71px]" />
              <Tab icon="floor" label="Floor Plans" w="w-[93px]" />
              <Tab icon="images" label="Images" w="w-[77px]" />
            </div>
            <div className="ml-[9px] w-[1284px] h-[219px] border border-[#a6a6a6] flex flex-col">
              <Toolbar items={tbB} />
              <SetupGrid />
            </div>
          </div>
        </div>
        <div className="h-[3px] shrink-0" />
      </div>
    </div>
  );
}

function Logo() {
  return (
    <svg viewBox="0 0 48 48" width="48" height="48" className="shrink-0">
      <circle cx="24" cy="24" r="21.500" fill="#fff" stroke="#b4b4b4" strokeWidth="3" />
      <path d="M38 15C26 8 8 14 8 26c0 6 8 13 24 11-10-1-18-5-16-11 2-7 12-13 22-11z" fill="#3aa83a" />
      <path d="M16 27c2-7 12-11 24-6-2 7-14 13-24 6z" fill="#1a4aa8" />
      <path d="M24 26c4-3 9-4 12-3-4 3-8 4-12 3z" fill="#fff" />
      <path d="M14 39c7 4 18 2 22-2-6 1-15 2-22 2z" fill="#b8dc98" />
    </svg>
  );
}

export default function App() {
  return (
    <div className={`relative w-[1516px] h-[785px] overflow-hidden bg-[#1b5a7d] pl-[5px] pr-[5px] pt-[4px] text-[11px] ${font}`}>
      <svg className="absolute w-0 h-0">
        <defs>
          <radialGradient id="gi" cx=".4" cy=".3" r=".8">
            <stop offset="0" stopColor="#8fd0f4" />
            <stop offset="1" stopColor="#1264ac" />
          </radialGradient>
          <linearGradient id="gr" x1="0" y1="0" x2="0" y2="1">
            <stop offset="0" stopColor="#f0503a" />
            <stop offset="1" stopColor="#b8200c" />
          </linearGradient>
        </defs>
      </svg>
      <div className="w-[1506px] h-[777px] bg-white border-t border-[#0072c6] flex flex-col">
        <div className="h-[52px] shrink-0 flex border-b border-[#dcdcdc]">
          <div className="w-[58px] pl-[5px] pt-[2px] shrink-0">
            <Logo />
          </div>
          <div className="flex-1 flex flex-col">
            <div className="h-[31px] flex items-start pt-[5px]">
              <div className="w-[100px] flex items-center">
                <span className="ml-[9px]"><Ico n="refresh" s={16} /></span>
                <span className="ml-[13px] flex flex-col items-center gap-[1px]">
                  <span className="w-[5px] h-px bg-[#777]" />
                  <span className="w-0 h-0 border-x-[3px] border-t-[3px] border-x-transparent border-t-[#777]" />
                </span>
              </div>
              <div className="flex-1 text-center text-[#555] pr-[3px] leading-[20px]">472: Business Success Seminar - Event - EventPro</div>
              <div className="w-[160px] flex justify-end items-center gap-[19px] pr-[15px] pt-[3px]">
                <span className="w-[8px] h-[2px] mt-[5px] bg-[#666]" />
                <span className="w-[10px] h-[10px] border border-[#666] border-t-2" />
                <svg viewBox="0 0 10 10" width="10" height="10">
                  <path d="M1 1l8 8M9 1L1 9" stroke="#555" strokeWidth="1.800" />
                </svg>
              </div>
            </div>
            <div className="flex-1 flex items-end relative">
              <div className="w-[53px] h-[20px] -mb-px border border-[#d0d0d0] border-b-white bg-white text-[#1278d0] text-center leading-[22px]">Home</div>
              <div className="w-[48px] text-center text-[#444] leading-[16px]">View</div>
              <div className="w-[52px] text-center text-[#444] leading-[16px]">Tools</div>
              <svg viewBox="0 0 10 6" width="10" height="6" className="ml-auto mr-[9px] mb-[6px]">
                <path d="M1 5l4-4 4 4" fill="none" stroke="#777" strokeWidth="1.600" />
              </svg>
            </div>
          </div>
        </div>
        <Ribbon />
        <div className="h-[601px] shrink-0 flex">
          <Nav />
          <Document />
        </div>
        <div className="flex-1 bg-[#0072c6] text-white flex items-center pl-[8px] relative">
          <span className="w-[111px]">User: AliceK_001000</span>
          <span className="w-[133px]">Client ID: PSI001000Beta</span>
          <span className="w-[123px]">Memory Usage: 183MB</span>
          <span>Version: 18.0.16</span>
          <span className="absolute right-[2px] bottom-[2px] w-[9px] h-[9px] grid grid-cols-3 gap-px">
            <span /><span /><span className="bg-[#cfe3f7]" />
            <span /><span className="bg-[#cfe3f7]" /><span className="bg-[#cfe3f7]" />
            <span className="bg-[#cfe3f7]" /><span className="bg-[#cfe3f7]" /><span className="bg-[#cfe3f7]" />
          </span>
        </div>
      </div>

      {/* callouts drawn on top of the screenshot */}
      <div className="absolute left-[5px] top-[53px] w-[1472px] h-[104px] border-[5px] border-[#00ff00] rounded-[14px]" />
      <div className="absolute left-[6px] top-[155px] w-[172px] h-[602px] border-[4px] border-[#ffff00] rounded-[16px]" />
      <svg className="absolute left-0 top-0 w-[1516px] h-[785px] pointer-events-none" viewBox="0 0 1516 785">
        <path d="M1175 23l-47 21" stroke="#00ff00" strokeWidth="4" />
        <path d="M1110 52l18-14 5 11z" fill="#00ff00" stroke="#00ff00" />
        <path d="M250 477l-55-38" stroke="#ffff00" strokeWidth="4" />
        <path d="M183 432l22 6-11 14z" fill="#ffff00" stroke="#ffff00" />
      </svg>
      <div className="absolute left-[1173px] top-[1px] w-[176px] h-[42px] bg-white border-[3px] border-[#00ff00] rounded-[6px] flex items-center justify-center font-['Lato',sans-serif] font-bold text-[28px] text-black">Ribbon</div>
      <div className="absolute left-[248px] top-[454px] w-[267px] h-[44px] bg-white border-[3px] border-[#ffff00] rounded-[6px] flex items-center justify-center font-['Lato',sans-serif] font-bold text-[27px] text-black">Navigation Panel</div>
    </div>
  );
}
